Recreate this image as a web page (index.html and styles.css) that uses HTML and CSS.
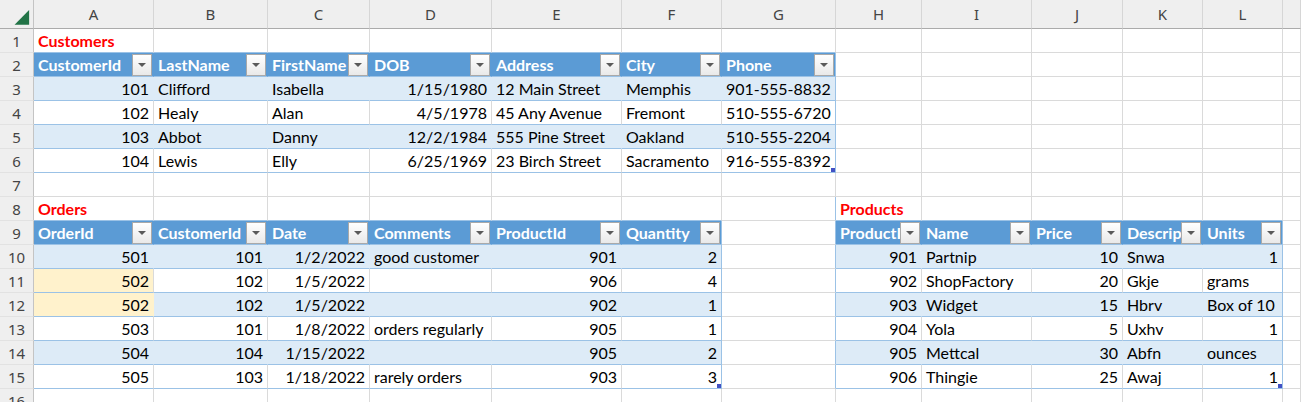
FILE: index.html
```html
<!DOCTYPE html>
<html>
<head>
<meta charset="utf-8">
<link rel="stylesheet" href="styles.css">
</head>
<body>
<div class="sheet">
  <div class="row top">
    <span class="corner"><svg width="34" height="28" viewBox="0 0 34 28"><polygon points="15,25 30,25 30,10" fill="#217346"/></svg></span>
    <span class="ch">A</span><span class="ch">B</span><span class="ch">C</span><span class="ch">D</span><span class="ch">E</span><span class="ch">F</span><span class="ch">G</span><span class="ch">H</span><span class="ch">I</span><span class="ch">J</span><span class="ch">K</span><span class="ch">L</span><span class="ch"></span>
  </div>
  <div class="row">
    <span class="rh">1</span>
    <span class="t ab">Customers</span><span class="ab"></span><span class="ab"></span><span class="ab"></span><span class="ab"></span><span class="ab"></span><span class="ab"></span>
    <span></span><span></span><span></span><span></span><span></span><span></span>
  </div>
  <div class="row">
    <span class="rh">2</span>
    <span class="h"><b class="ht">CustomerId</b><i class="dd"></i></span>
    <span class="h"><b class="ht">LastName</b><i class="dd"></i></span>
    <span class="h"><b class="ht">FirstName</b><i class="dd"></i></span>
    <span class="h"><b class="ht">DOB</b><i class="dd"></i></span>
    <span class="h"><b class="ht">Address</b><i class="dd"></i></span>
    <span class="h"><b class="ht">City</b><i class="dd"></i></span>
    <span class="h end"><b class="ht">Phone</b><i class="dd"></i></span>
    <span></span><span></span><span></span><span></span><span></span><span></span>
  </div>
  <div class="row">
    <span class="rh">3</span>
    <span class="a n">101</span><span class="a">Clifford</span><span class="a">Isabella</span><span class="a n">1/15/1980</span><span class="a">12 Main Street</span><span class="a">Memphis</span><span class="a end">901-555-8832</span>
    <span></span><span></span><span></span><span></span><span></span><span></span>
  </div>
  <div class="row">
    <span class="rh">4</span>
    <span class="w n">102</span><span class="w">Healy</span><span class="w">Alan</span><span class="w n">4/5/1978</span><span class="w">45 Any Avenue</span><span class="w">Fremont</span><span class="w end">510-555-6720</span>
    <span></span><span></span><span></span><span></span><span></span><span></span>
  </div>
  <div class="row">
    <span class="rh">5</span>
    <span class="a n">103</span><span class="a">Abbot</span><span class="a">Danny</span><span class="a n">12/2/1984</span><span class="a">555 Pine Street</span><span class="a">Oakland</span><span class="a end">510-555-2204</span>
    <span></span><span></span><span></span><span></span><span></span><span></span>
  </div>
  <div class="row">
    <span class="rh">6</span>
    <span class="w n">104</span><span class="w">Lewis</span><span class="w">Elly</span><span class="w n">6/25/1969</span><span class="w">23 Birch Street</span><span class="w">Sacramento</span><span class="w end">916-555-8392<i class="grip"></i></span>
    <span></span><span></span><span></span><span></span><span></span><span></span>
  </div>
  <div class="row">
    <span class="rh">7</span>
    <span></span><span></span><span></span><span></span><span></span><span></span><span></span><span></span><span></span><span></span><span></span><span></span><span></span>
  </div>
  <div class="row">
    <span class="rh">8</span>
    <span class="t ab">Orders</span><span class="ab"></span><span class="ab"></span><span class="ab"></span><span class="ab"></span><span class="ab"></span>
    <span class="pre"></span>
    <span class="t ab">Products</span><span class="ab"></span><span class="ab"></span><span class="ab"></span><span class="ab"></span>
    <span></span>
  </div>
  <div class="row">
    <span class="rh">9</span>
    <span class="h"><b class="ht">OrderId</b><i class="dd"></i></span>
    <span class="h"><b class="ht">CustomerId</b><i class="dd"></i></span>
    <span class="h"><b class="ht">Date</b><i class="dd"></i></span>
    <span class="h"><b class="ht">Comments</b><i class="dd"></i></span>
    <span class="h"><b class="ht">ProductId</b><i class="dd"></i></span>
    <span class="h end"><b class="ht">Quantity</b><i class="dd"></i></span>
    <span class="pre"></span>
    <span class="h"><b class="ht">ProductId</b><i class="dd"></i></span>
    <span class="h"><b class="ht">Name</b><i class="dd"></i></span>
    <span class="h"><b class="ht">Price</b><i class="dd"></i></span>
    <span class="h"><b class="ht">Description</b><i class="dd"></i></span>
    <span class="h end"><b class="ht">Units</b><i class="dd"></i></span>
    <span></span>
  </div>
  <div class="row">
    <span class="rh">10</span>
    <span class="a n">501</span><span class="a n">101</span><span class="a n">1/2/2022</span><span class="a">good customer</span><span class="a n">901</span><span class="a n end">2</span>
    <span class="pre"></span>
    <span class="a n">901</span><span class="a">Partnip</span><span class="a n">10</span><span class="a">Snwa</span><span class="a n end">1</span>
    <span></span>
  </div>
  <div class="row">
    <span class="rh">11</span>
    <span class="w n dup">502</span><span class="w n">102</span><span class="w n">1/5/2022</span><span class="w"></span><span class="w n">906</span><span class="w n end">4</span>
    <span class="pre"></span>
    <span class="w n">902</span><span class="w">ShopFactory</span><span class="w n">20</span><span class="w">Gkje</span><span class="w end">grams</span>
    <span></span>
  </div>
  <div class="row">
    <span class="rh">12</span>
    <span class="a n dup">502</span><span class="a n">102</span><span class="a n">1/5/2022</span><span class="a"></span><span class="a n">902</span><span class="a n end">1</span>
    <span class="pre"></span>
    <span class="a n">903</span><span class="a">Widget</span><span class="a n">15</span><span class="a">Hbrv</span><span class="a end">Box of 10</span>
    <span></span>
  </div>
  <div class="row">
    <span class="rh">13</span>
    <span class="w n">503</span><span class="w n">101</span><span class="w n">1/8/2022</span><span class="w">orders regularly</span><span class="w n">905</span><span class="w n end">1</span>
    <span class="pre"></span>
    <span class="w n">904</span><span class="w">Yola</span><span class="w n">5</span><span class="w">Uxhv</span><span class="w n end">1</span>
    <span></span>
  </div>
  <div class="row">
    <span class="rh">14</span>
    <span class="a n">504</span><span class="a n">104</span><span class="a n">1/15/2022</span><span class="a"></span><span class="a n">905</span><span class="a n end">2</span>
    <span class="pre"></span>
    <span class="a n">905</span><span class="a">Mettcal</span><span class="a n">30</span><span class="a">Abfn</span><span class="a end">ounces</span>
    <span></span>
  </div>
  <div class="row">
    <span class="rh">15</span>
    <span class="w n">505</span><span class="w n">103</span><span class="w n">1/18/2022</span><span class="w">rarely orders</span><span class="w n">903</span><span class="w n end">3<i class="grip"></i></span>
    <span class="pre"></span>
    <span class="w n">906</span><span class="w">Thingie</span><span class="w n">25</span><span class="w">Awaj</span><span class="w n end">1<i class="grip"></i></span>
    <span></span>
  </div>
  <div class="row">
    <span class="rh">16</span>
    <span></span><span></span><span></span><span></span><span></span><span></span><span></span><span></span><span></span><span></span><span></span><span></span><span></span>
  </div>
</div>
</body>
</html>
```
FILE: styles.css
```css
html, body {
  margin: 0;
  padding: 0;
  background: #fff;
}
body {
  font-family: Lato, "Liberation Sans", sans-serif;
  font-size: 16px;
  color: #000;
  overflow: hidden;
}
.sheet {
  display: flex;
  flex-direction: column;
  width: 1301px;
}
.row {
  display: grid;
  grid-template-columns: 34px 120px 114px 102px 122px 130px 100px 114px 86px 110px 91px 80px 80px 1fr;
  height: 24px;
  flex: none;
}
.row.top {
  height: 29px;
}
.row > span {
  box-sizing: border-box;
  border-right: 1px solid #dadada;
  border-bottom: 1px solid #dadada;
  display: flex;
  align-items: flex-end;
  padding: 0 4px 2px;
  white-space: nowrap;
  overflow: hidden;
  line-height: 18px;
  position: relative;
}
.row.top > span {
  background: #efefef;
  border-bottom: 1px solid #ababab;
  border-right: 1px solid #d6d6d6;
  justify-content: center;
  align-items: center;
  padding: 0;
  font-family: "Noto Sans", "Open Sans", sans-serif;
  font-size: 15px;
  color: #444;
}
.row.top > .corner {
  border-right: 1px solid #c4c4c4;
  align-items: stretch;
  justify-content: stretch;
}
.corner svg {
  display: block;
}
.row > .rh {
  background: #efefef;
  border-right: 1px solid #c4c4c4;
  border-bottom: 1px solid #e2e2e2;
  justify-content: center;
  align-items: center;
  padding: 0;
  font-family: "Noto Sans", "Open Sans", sans-serif;
  font-size: 15px;
  color: #444;
}
.row > .t {
  color: #ff0000;
  font-weight: 700;
}
.row > .ab {
  border-bottom-color: #9bc2e6;
}
.row > .n {
  justify-content: flex-end;
}
.row > .h {
  background: #5b9bd5;
  color: #fff;
  border-right-color: #5b9bd5;
  border-bottom-color: #9bc2e6;
  align-items: center;
  padding: 0 1px 0 4px;
}
.ht {
  flex: 1;
  min-width: 0;
  overflow: hidden;
  font-weight: 700;
}
.dd {
  flex: none;
  box-sizing: border-box;
  width: 20px;
  height: 22px;
  border: 1px solid #a9a9a9;
  background: linear-gradient(#ffffff, #e9e9e9);
  display: flex;
  align-items: center;
  justify-content: center;
}
.dd::after {
  content: "";
  width: 0;
  height: 0;
  border-top: 4px solid #5a5a5a;
  border-left: 4px solid transparent;
  border-right: 4px solid transparent;
}
.row > .a {
  background: #ddebf7;
  border-right-color: #ddebf7;
  border-bottom-color: #9bc2e6;
}
.row > .w {
  background: #fff;
  border-bottom-color: #9bc2e6;
}
.row > .dup {
  background: #fff2cc;
}
.row > .a.dup {
  border-right-color: #fff2cc;
}
.row > .end,
.row > .pre {
  border-right-color: #9bc2e6;
}
.row > .h.end {
  border-right-color: #9bc2e6;
}
.grip {
  position: absolute;
  right: -1px;
  bottom: -1px;
  width: 5px;
  height: 5px;
  background: #4151c4;
}
```
